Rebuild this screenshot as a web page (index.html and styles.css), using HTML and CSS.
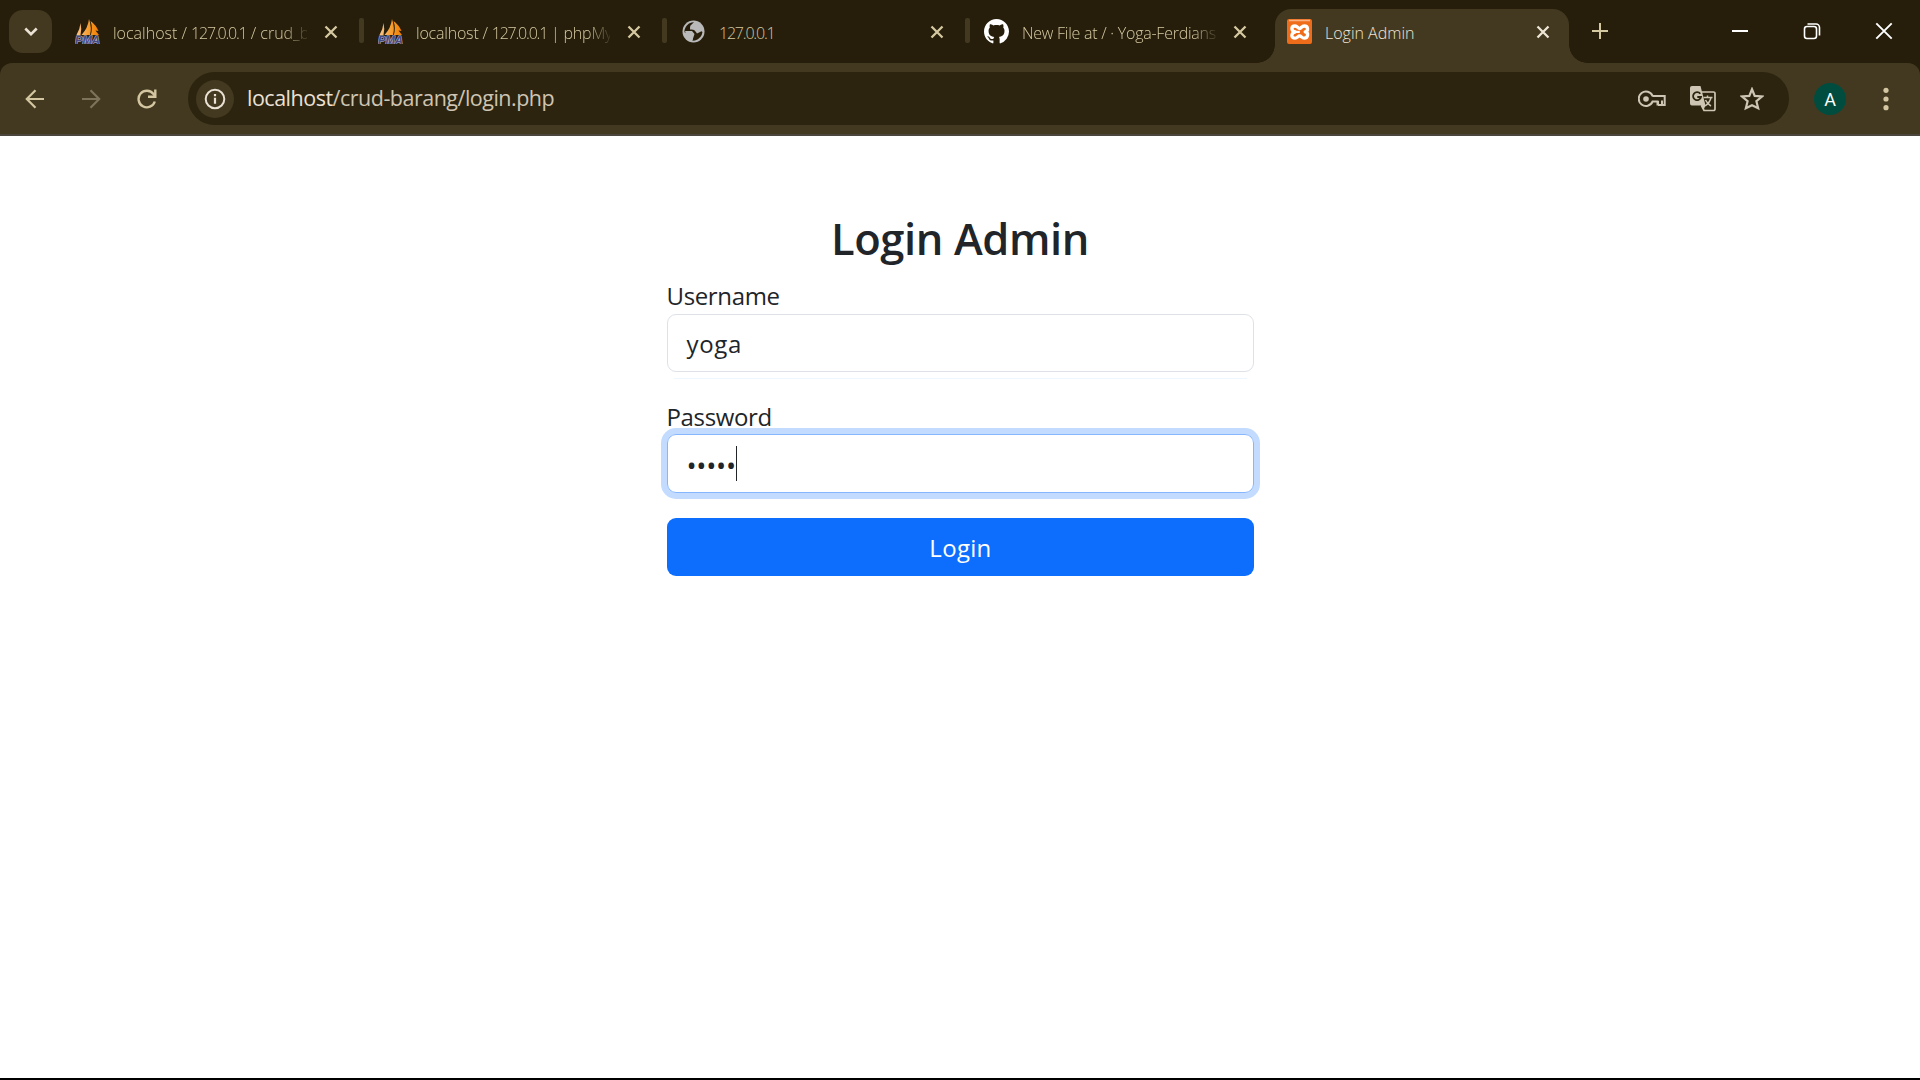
FILE: index.html
```html
<!DOCTYPE html>
<html lang="en">
<head>
<meta charset="utf-8">
<title>Login Admin</title>
<link rel="stylesheet" href="styles.css">
</head>
<body>
<svg class="defs" width="0" height="0">
  <defs>
    <linearGradient id="sail" x1="0" y1="0" x2="1" y2="0"><stop offset="0" stop-color="#f9c58b"/><stop offset=".55" stop-color="#f89c2c"/><stop offset="1" stop-color="#f07c00"/></linearGradient>
    <symbol id="pma" viewBox="0 0 25 25">
      <path fill="url(#sail)" d="M5.500 4Q7 10 5.500 16H1.500Q5 10 5.500 4ZM14 0Q17 9 15 16H6.500Q13 9 14 0ZM15.500 2Q21 6 23.500 12L20.500 11.500 24 16H15.800Q18 9 15.500 2Z"/>
      <text x="0" y="24.500" textLength="25" lengthAdjust="spacingAndGlyphs" font-family="Liberation Sans" font-size="10.500" font-weight="700" font-style="italic" fill="#4a4a83" stroke="#b9b7ce" stroke-width="1" paint-order="stroke">PMA</text>
    </symbol>
    <symbol id="x" viewBox="0 0 14 14"><path d="M1.500 1.500l11 11M12.500 1.500l-11 11" fill="none" stroke="currentColor" stroke-width="2.300"/></symbol>
  </defs>
</svg>
<header class="browser">
  <div class="tabstrip">
    <button class="tab-search"><svg width="14" height="9" viewBox="0 0 14 9"><path d="M1.300 1.500L7 7.200l5.700-5.700" fill="none" stroke="currentColor" stroke-width="2.600"/></svg></button>
    <nav class="tabs">
      <div class="tab divided"><svg class="favicon"><use href="#pma"/></svg><span class="title fade">localhost / <span class="ip">127.0.0.1</span> / crud_b</span><svg class="close"><use href="#x"/></svg></div>
      <div class="tab divided"><svg class="favicon"><use href="#pma"/></svg><span class="title fade server">localhost / <span class="ip">127.0.0.1</span> | phpMy</span><svg class="close"><use href="#x"/></svg></div>
      <div class="tab divided"><svg class="favicon" viewBox="0 0 25 25"><circle cx="12.500" cy="12.500" r="11" fill="#b9b9b9"/><path fill="#261e0b" d="M3.500 11Q5 5 10.500 3.500L13 3.300 9.500 6.500 9 9.500 13.500 11 16 14.500 20.500 12.200 21.500 13Q20.500 19.500 14 21.500L11.500 21.700 12 18 9.500 15.500 3.500 13.300Z"/><path fill="#b9b9b9" d="M9.500 7.500l3-2.500 4 .5 3.500 4-2 3.500-3-.500-2.500-2H9zM4 12h7l2.500 3-2 6-5-2z"/></svg><span class="title"><span class="ip">127.0.0.1</span></span><svg class="close"><use href="#x"/></svg></div>
      <div class="tab"><svg class="favicon" viewBox="0 0 16 16"><path fill="#fff" d="M8 0C3.580 0 0 3.580 0 8c0 3.540 2.290 6.530 5.470 7.590.4.070.550-.170.550-.380 0-.190-.010-.820-.010-1.490-2.010.370-2.530-.490-2.690-.940-.090-.230-.480-.940-.820-1.130-.280-.150-.680-.520-.010-.530.630-.010 1.080.580 1.230.820.720 1.210 1.870.870 2.330.660.070-.520.280-.870.510-1.070-1.780-.2-3.640-.890-3.640-3.950 0-.870.310-1.590.820-2.150-.080-.2-.360-1.020.080-2.120 0 0 .670-.210 2.200.820.640-.180 1.320-.270 2-.270s1.360.090 2 .270c1.530-1.040 2.200-.820 2.200-.820.440 1.100.160 1.920.080 2.120.510.560.820 1.270.820 2.150 0 3.070-1.870 3.750-3.650 3.950.290.250.540.730.540 1.480 0 1.070-.010 1.930-.010 2.200 0 .210.150.460.550.380A8.010 8.010 0 0 0 16 8c0-4.420-3.580-8-8-8z"/></svg><span class="title fade repo">New File at / · Yoga-Ferdians</span><svg class="close"><use href="#x"/></svg></div>
      <div class="tab active"><svg class="favicon" viewBox="0 0 25 25"><rect width="25" height="25" rx="2" fill="#ef6c1b"/><path d="M2 1.500h21" stroke="#f9b184" stroke-width="1.500"/><path d="M8.300 12.800C3.500 12 4.200 7 8 7c2.500 0 3 2.500 4.700 2.500S14.500 7 17.300 7c4 0 4.300 5 .9 5.900 3.700.8 3 6.300-1 6.300-2.500 0-2.900-2.300-4.600-2.300s-2 2.300-4.600 2.300c-4.200 0-4.300-5.200.3-6.400z" fill="none" stroke="#fff" stroke-width="3.300" stroke-linejoin="round"/><path d="M8.300 12.900h4.500" stroke="#fff" stroke-width="2.200"/></svg><span class="title">Login Admin</span><svg class="close"><use href="#x"/></svg></div>
    </nav>
    <button class="new-tab"><svg width="16" height="16" viewBox="0 0 16 16"><path d="M8 0v16M0 8h16" stroke="currentColor" stroke-width="2"/></svg></button>
    <div class="window-controls">
      <svg width="18" height="18" viewBox="0 0 18 18"><path d="M1 9h16" stroke="#fff" stroke-width="2"/></svg>
      <svg width="18" height="18" viewBox="0 0 18 18" fill="none" stroke="#fff" stroke-width="1.600"><rect x="1.500" y="4.500" width="12" height="12" rx="2.500"/><path d="M4.500 2h8.500a3.500 3.500 0 0 1 3.500 3.500v8"/></svg>
      <svg width="18" height="18" viewBox="0 0 18 18"><path d="M1.300 1.300l15.400 15.400M16.700 1.300L1.300 16.700" stroke="#fff" stroke-width="1.900"/></svg>
    </div>
  </div>
  <div class="toolbar">
    <div class="nav">
      <svg width="20" height="20" viewBox="0 0 20 20"><path d="M19 10H2.500M10.500 1.300L1.800 10l8.700 8.700" fill="none" stroke="#d3c6a0" stroke-width="2.200"/></svg>
      <svg width="20" height="20" viewBox="0 0 20 20"><path d="M1 10h16.500M9.500 1.300l8.700 8.700-8.700 8.700" fill="none" stroke="#7d735b" stroke-width="2.200"/></svg>
      <svg width="20" height="20" viewBox="0 0 20 20"><path d="M17.800 12.500A8.300 8.300 0 1 1 16.500 5L18 7" fill="none" stroke="#d3c6a0" stroke-width="2.400"/><path d="M18.300 .5v7.200H11" fill="none" stroke="#d3c6a0" stroke-width="2.400"/></svg>
    </div>
    <div class="omnibox">
      <span class="site-info"><svg width="22" height="22" viewBox="0 0 22 22"><circle cx="11" cy="11" r="9.300" fill="none" stroke="#ebe1d4" stroke-width="2"/><path d="M11 9.800v6M11 6v2.200" stroke="#ebe1d4" stroke-width="2.200"/></svg></span>
      <span class="url"><b>localhost</b>/crud-barang/login.php</span>
      <div class="actions">
        <svg width="28" height="18" viewBox="0 0 28 18" fill="none" stroke="#cfc5b4" stroke-width="2"><path d="M14.500 6H26.700v9H24v-4.500M20 15v-4M20 15h6.500M19.500 15.500V11.500H14.600A7.200 7.200 0 1 1 14.600 6"/><circle cx="8" cy="9" r="2.800" fill="#cfc5b4" stroke="none"/></svg>
        <svg width="26" height="26" viewBox="0 0 26 26"><path d="M12 6h11.500a1.500 1.500 0 0 1 1.500 1.500v15.500a1.500 1.500 0 0 1-1.500 1.500H14l-2.500-5" fill="none" stroke="#cfc5b4" stroke-width="1.700"/><path d="M2 0h8.500l5 19.500H2a2 2 0 0 1-2-2V2a2 2 0 0 1 2-2zM11 19.500h4.500L13.500 24z" fill="#cfc5b4"/><path d="M10.300 7.800A4 4 0 1 0 11 11H7.300" fill="none" stroke="#2c240e" stroke-width="1.800"/><path d="M13.500 11.500h9M17.500 9.500v2M21 11.500q-1 5-6 8.500M15.500 14q2 4 5.500 6" fill="none" stroke="#cfc5b4" stroke-width="1.500"/></svg>
        <svg width="24" height="24" viewBox="0 0 24 24"><path d="M12 2.600l2.450 6.100 6.550.500-5 4.250 1.600 6.500L12 17.200l-5.600 2.750L8 13.450 3 9.200l6.550-.500z" transform="translate(-1.200 -.6) scale(1.100)" fill="none" stroke="#cfc5b4" stroke-width="2"/></svg>
      </div>
    </div>
    <span class="avatar">A</span>
    <svg class="menu" width="6" height="24" viewBox="0 0 6 24" fill="#d3c6a0"><circle cx="3" cy="3.300" r="2.600"/><circle cx="3" cy="12" r="2.600"/><circle cx="3" cy="20.700" r="2.600"/></svg>
  </div>
</header>
<main class="page">
  <form class="login">
    <h2>Login Admin</h2>
    <label class="user-label">Username</label>
    <div class="field user-field">yoga</div>
    <div class="trace"></div>
    <label class="pass-label">Password</label>
    <div class="field focused"><span class="dots">•••••</span><i class="caret"></i></div>
    <button class="submit" type="button">Login</button>
  </form>
</main>
</body>
</html>
```
FILE: styles.css
```css
* { box-sizing: border-box; }
body { margin: 0; height: 1080px; display: flex; flex-direction: column; overflow: hidden; background: #fff; font-family: "Open Sans", "Noto Sans", sans-serif; }
button { border: 0; padding: 0; font: inherit; }
svg { display: block; flex: none; }
.defs { position: absolute; }

.browser { background: #261e0b; border-bottom: 2px solid #4b453d; height: 136px; }
.tabstrip { display: flex; height: 63px; padding: 9px 0 0 9px; color: #d5c9a2; }
.tab-search { width: 43px; height: 43px; margin-top: 1px; border-radius: 14px; background: #423920; color: #ebe1d4; display: grid; place-items: center; }
.tabs { display: flex; gap: 9px; margin-left: 11px; }
.tab { position: relative; width: 294px; height: 54px; padding: 0 12px 9px; display: flex; align-items: center; }
.divided::after { content: ""; position: absolute; right: -7px; top: 9px; width: 5px; height: 25px; border-radius: 2px; background: #423920; }
.favicon { width: 25px; height: 25px; }
.title { width: 194px; margin-left: 13px; white-space: nowrap; font-size: 16px; font-weight: 300; line-height: 26px; padding-top: 2px; }
.fade { -webkit-mask-image: linear-gradient(90deg, #000 88%, transparent 102%); mask-image: linear-gradient(90deg, #000 88%, transparent 102%); }
.ip { letter-spacing: -1.2px; }
.server { letter-spacing: -.2px; }
.repo { letter-spacing: -.25px; }
.close { width: 14px; height: 14px; margin-left: 17px; }
.active { background: #423920; color: #efe5d6; border-radius: 16px 16px 0 0; }
.active::before, .active::after { content: ""; position: absolute; bottom: 0; width: 18px; height: 18px; }
.active::before { left: -18px; background: radial-gradient(circle at 0 0, transparent 17.5px, #423920 18px); }
.active::after { right: -18px; background: radial-gradient(circle at 100% 0, transparent 17.5px, #423920 18px); }
.new-tab { width: 16px; height: 16px; margin: 14px 0 0 23px; background: none; color: inherit; }
.window-controls { display: flex; gap: 54px; margin: 13px 27px 0 auto; }

.toolbar { height: 71px; background: #423920; border-radius: 12px 12px 0 0; display: flex; align-items: center; padding: 0 31px 0 25px; }
.nav { display: flex; gap: 36px; }
.omnibox { width: 1601px; height: 53px; margin-left: 31px; border-radius: 27px; background: #2c240e; display: flex; align-items: center; padding: 0 25px 0 8px; }
.site-info { width: 38px; height: 38px; border-radius: 50%; background: #423920; display: grid; place-items: center; }
.url { margin-left: 13px; font-size: 21.500px; line-height: 32px; padding-bottom: 1px; letter-spacing: -.5px; color: #cfc5b4; white-space: nowrap; }
.url b { font-weight: 400; color: #ebe1d4; }
.actions { margin-left: auto; display: flex; align-items: center; gap: 24px; }
.avatar { width: 32px; height: 32px; border-radius: 50%; margin-left: 25px; background: #004d40; color: #fff; font: 18px/33px Roboto, sans-serif; text-align: center; }
.menu { margin-left: auto; }

.page { flex: 1; border-bottom: 2px solid #000; display: flex; justify-content: center; color: #212529; }
.login { width: 587px; margin-top: 76px; display: flex; flex-direction: column; }
h2 { margin: 0; height: 66px; font-size: 43.500px; line-height: 54px; letter-spacing: -.4px; font-weight: 600; text-align: center; white-space: nowrap; }
label { font-size: 24px; line-height: 36px; height: 36px; letter-spacing: -.35px; }
.field { height: 58px; border: 1px solid #dee2e6; border-radius: 9px; padding: 0 18px; display: flex; align-items: center; font-size: 24px; }
.user-field { padding-left: 19px; letter-spacing: .7px; }
.trace { height: 1px; margin: 6px 7px 0; background: #eef7ff; }
.pass-label { margin-top: 19px; padding-top: 1px; }
.focused { height: 59px; padding-left: 19px; border-color: #86b7fe; box-shadow: 0 0 0 6px #c2dbff; }
.dots { font-size: 27px; letter-spacing: -.3px; padding-top: 4px; }
.caret { width: 1px; height: 35px; background: #212529; }
.submit { height: 58px; margin-top: 25px; border-radius: 9px; background: #0d6efd; color: #fff; font-size: 24px; letter-spacing: .3px; padding-left: 1px; }
```
